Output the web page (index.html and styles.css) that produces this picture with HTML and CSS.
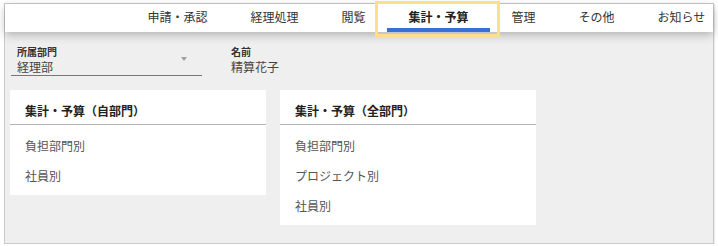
FILE: index.html
```html
<!DOCTYPE html>
<html lang="ja">
<head>
    <meta charset="UTF-8">
    <meta name="viewport" content="width=device-width, initial-scale=1.0">
    <title>集計・予算</title>
    <link rel="stylesheet" href="styles.css">
</head>
<body>
    <div class="frame">
        <nav class="topnav">
            <a class="nav-item">申請・承認</a>
            <a class="nav-item">経理処理</a>
            <a class="nav-item">閲覧</a>
            <a class="nav-item active">集計・予算</a>
            <a class="nav-item">管理</a>
            <a class="nav-item">その他</a>
            <a class="nav-item">お知らせ</a>
        </nav>

        <div class="content">
            <div class="filters">
                <div class="field select">
                    <div>
                        <div class="field-label">所属部門</div>
                        <div class="field-value">経理部</div>
                    </div>
                    <span class="caret"></span>
                </div>
                <div class="field">
                    <div class="field-label">名前</div>
                    <div class="field-value">精算花子</div>
                </div>
            </div>

            <div class="cards">
                <div class="card">
                    <div class="card-title">集計・予算（自部門）</div>
                    <ul class="menu">
                        <li>負担部門別</li>
                        <li>社員別</li>
                    </ul>
                </div>
                <div class="card">
                    <div class="card-title">集計・予算（全部門）</div>
                    <ul class="menu">
                        <li>負担部門別</li>
                        <li>プロジェクト別</li>
                        <li>社員別</li>
                    </ul>
                </div>
            </div>
        </div>
    </div>
</body>
</html>
```

FILE: styles.css
```css
body {
    margin: 0;
    background-color: white;
    font-family: "Noto Sans CJK JP", "Noto Sans", sans-serif;
    color: #333;
}

.frame {
    margin: 3px 0 0 4px;
    width: 708px;
    height: 239px;
    border: 1px solid #c9c9c9;
    box-shadow: 1px 1px 1px rgba(0,0,0,0.08);
    background-color: #efefef;
}

/* ナビゲーション */
.topnav {
    position: relative;
    z-index: 2;
    display: flex;
    height: 28px;
    padding-left: 121px;
    background-color: white;
    box-shadow: 0 3px 10px rgba(0,0,0,0.26);
}

.nav-item {
    flex-shrink: 0;
    position: relative;
    box-sizing: border-box;
    height: 28px;
    padding: 5px 21.5px 0;
    font-size: 12px;
    line-height: 16px;
    color: #333;
    white-space: nowrap;
}

.nav-item.active {
    font-weight: bold;
    color: #222;
    border-bottom: 4px solid #3a6fd8;
}

.nav-item.active::after {
    content: "";
    position: absolute;
    top: -3px;
    bottom: -9px;
    left: -12px;
    right: -10px;
    border: 3px solid #fbe08a;
}

/* 本文 */
.content {
    padding: 13px 5px;
}

.filters {
    display: flex;
    gap: 23px;
    margin: 0 0 14px 1px;
}

.field {
    padding: 0 6px;
}

.select {
    display: flex;
    align-items: center;
    justify-content: space-between;
    width: 179px;
    border-bottom: 1px solid #777;
}

.field-label {
    font-size: 10px;
    line-height: 14px;
    font-weight: bold;
    color: #333;
}

.field-value {
    font-size: 12px;
    line-height: 16px;
    color: #444;
}

.caret {
    margin: 0 9px 2px 0;
    border-left: 3px solid transparent;
    border-right: 3px solid transparent;
    border-top: 4px solid #a0a0a0;
}

.cards {
    display: flex;
    align-items: flex-start;
    gap: 14px;
}

.card {
    width: 256px;
    padding-bottom: 4px;
    background-color: white;
}

.card-title {
    padding: 13px 15px 5px;
    font-size: 12px;
    line-height: 16px;
    font-weight: bold;
    color: #222;
    border-bottom: 1px solid #b4b4b4;
}

.menu {
    list-style: none;
    margin: 0;
    padding: 6px 0 0;
}

.menu li {
    padding: 0 15px;
    font-size: 12px;
    line-height: 30px;
    color: #555;
}
```
